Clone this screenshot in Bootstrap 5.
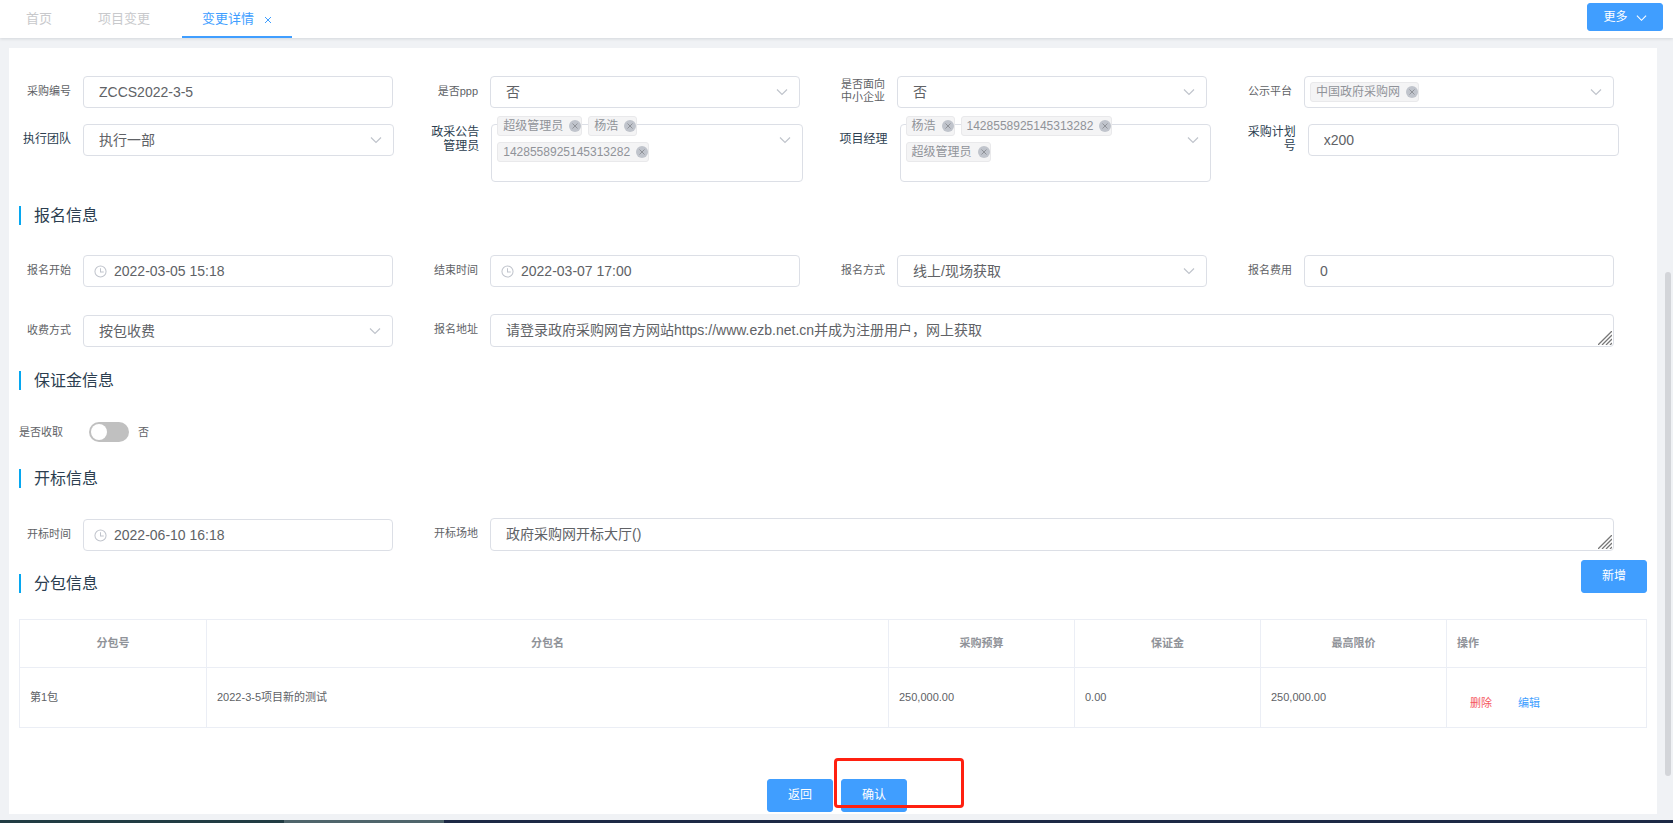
<!DOCTYPE html>
<html lang="zh-CN">
<head>
<meta charset="utf-8">
<meta name="viewport" content="width=device-width, initial-scale=1">
<title>变更详情</title>
<link href="https://cdn.jsdelivr.net/npm/bootstrap@5.3.0/dist/css/bootstrap.min.css" rel="stylesheet">
<style>
  body { font-family: "Liberation Sans", "Noto Sans CJK SC", sans-serif; font-size: 14px; color: #606266; background: #f0f2f5; }
  button, input, select, textarea { font-family: inherit; }

  /* top tabs */
  .topbar { height: 38px; box-shadow: 0 1px 3px rgba(0, 21, 41, .12); }
  .page-tabs { gap: 18px; padding-left: 12px; }
  .page-tabs .nav-link { height: 38px; padding: 0 14px; line-height: 38px; font-size: 13px; color: #c8c9cc; border-bottom: 2px solid transparent; }
  .page-tabs .nav-link.active { padding: 0 20px; color: #409eff; border-color: #409eff; }
  .page-tabs svg { margin-left: 10px; }
  .btn-main { --bs-btn-color: #fff; --bs-btn-bg: #409eff; --bs-btn-border-color: #409eff; --bs-btn-hover-color: #fff; --bs-btn-hover-bg: #66b1ff; --bs-btn-hover-border-color: #66b1ff; width: 66px; height: 33px; padding: 0 0 2px; font-size: 12px; line-height: 16px; border-radius: 3px; }
  .btn-more { width: 76px; height: 28px; margin: 3px 10px 0 0; padding: 0; }

  /* form */
  .panel { margin: 10px 16px 6px 9px; padding: 28px 10px 2px; }
  .cell { display: flex; padding-right: 33px; }
  .cell > label, .cell > .cell-label { flex: none; width: 52px; height: 30px; margin-right: 12px; display: flex; align-items: center; justify-content: flex-end; text-align: right; font-size: 11px; line-height: 13px; }
  .cell > .field { flex: 1; min-width: 0; position: relative; }
  .row-wide { margin: 16px -5px 0 0; }
  .row-wide .cell > label, .row-wide .cell > .cell-label { font-size: 12px; line-height: 14px; color: #2c3e50; }
  .form-control, .form-select { height: 32px; padding: 0 15px; font-size: 14px; line-height: 30px; color: #606266; border: 1px solid #dcdfe6; border-radius: 4px; }
  .form-select { background-image: url("data:image/svg+xml,%3Csvg xmlns='http://www.w3.org/2000/svg' viewBox='0 0 12 8'%3E%3Cpath d='M1 1.5l5 5 5-5' fill='none' stroke='%23c0c4cc' stroke-width='1.2'/%3E%3C/svg%3E"); background-size: 12px 8px; background-position: right 11px center; }
  textarea.form-control { display: block; height: 33px; min-height: 33px; resize: none; overflow: hidden; }
  .has-clock .form-control { padding-left: 30px; }
  .has-clock svg { position: absolute; left: 11px; top: 10px; }
  .grip { position: absolute; right: 2px; bottom: 2px; }

  /* multiple choice boxes */
  .multi { display: flex; align-items: center; justify-content: space-between; min-height: 32px; padding: 0 11px 0 5px; border: 1px solid #dcdfe6; border-radius: 4px; }
  .multi-tall { height: 58px; align-items: flex-start; }
  .multi-tall .tags { margin-top: -9px; }
  .multi-tall > svg { margin-top: 11px; }
  .tags { display: flex; flex-wrap: wrap; gap: 6px; }
  .tag { display: flex; align-items: center; height: 20px; padding: 0 0 0 5px; font-size: 12px; line-height: 18px; color: #909399; background: #f4f4f5; border: 1px solid #e9e9eb; border-radius: 3px; }
  .tag button { display: flex; width: 12px; height: 12px; margin-left: 6px; padding: 0; border: 0; border-radius: 50%; background: #c0c4cc; }

  .section-title { height: 19px; margin: 0; padding-left: 13px; border-left: 2px solid #06a7f0; font-size: 16px; font-weight: 400; line-height: 19px; color: #2c3e50; }
  .gap-title { margin-top: 24px; }
  .gap-fields { margin-top: 30px; }
  .gap-line { margin-top: 27px; }

  .switch-line { margin-top: 32px; gap: 26px; font-size: 11px; line-height: 20px; }
  .switch-line .form-check { min-height: 20px; margin: 0; padding: 0; display: flex; gap: 9px; }
  .switch-line .form-check-input { width: 40px; height: 20px; margin: 0; border: 0; background-color: #c0c0c0; background-image: url("data:image/svg+xml,%3Csvg xmlns='http://www.w3.org/2000/svg' viewBox='0 0 20 20'%3E%3Ccircle cx='10' cy='10' r='8' fill='white'/%3E%3C/svg%3E"); background-size: 20px 20px; }

  /* packages */
  .packages-head { margin-top: 9px; }
  .packages { margin: 26px 0 0; table-layout: fixed; font-size: 11px; border-color: #ebeef5; --bs-table-color: #606266; }
  .packages th, .packages td { padding: 0 10px; vertical-align: middle; }
  .packages th { height: 48px; color: #909399; text-align: center; }
  .packages td { height: 60px; }
  .packages .slim { width: 186px; }
  .packages .slim:first-child { width: 187px; }
  .packages .ops { width: 200px; text-align: left; }
  .packages td.ops { padding: 9px 0 0 23px; }
  .packages .btn { padding: 0; margin-right: 26px; font-size: 11px; line-height: 16px; border: 0; color: #409eff; }
  .packages .btn.remove { color: #f5565c; }
  .actions { margin-top: 51px; padding-left: 8px; gap: 8px; }
  .confirm-mark { position: absolute; left: -7px; top: -21px; width: 130px; height: 50px; border: 3px solid #ff2010; border-radius: 4px; pointer-events: none; }

  .scroll-thumb { position: absolute; right: 2px; top: 33%; bottom: 47px; width: 6px; border-radius: 3px; background: #d3d5d9; }
  .taskbar { height: 3px; background: #1d2945; }
  .taskbar .dim { width: 17%; background: #213c43; }
  .taskbar .lit { width: 160px; background: #4f656b; }
</style>
</head>
<body>
<svg width="0" height="0" class="position-absolute" aria-hidden="true">
  <symbol id="down" viewBox="0 0 12 8"><path d="M1 1.500l5 5 5-5" fill="none" stroke="currentColor" stroke-width="1.2"/></symbol>
  <symbol id="cross" viewBox="0 0 12 12"><path d="M3.500 3.500l5 5m0-5l-5 5" fill="none" stroke="#909399" stroke-width="1"/></symbol>
  <symbol id="clock" viewBox="0 0 14 14"><circle cx="7" cy="7" r="6" fill="none" stroke="#c0c4cc" stroke-width="1.1"/><path d="M7 3.500v4h3.500" fill="none" stroke="#c0c4cc" stroke-width="1.1"/></symbol>
  <symbol id="grip" viewBox="0 0 14 14"><path d="M0 14L14 0M4 14L14 4M8 14l6-6M12 14l2-2" fill="none" stroke="#777" stroke-width="1.3"/></symbol>
</svg>
<div class="position-relative min-vh-100 d-flex flex-column">
  <header class="topbar bg-white d-flex justify-content-between align-items-start">
    <ul class="nav page-tabs flex-nowrap">
      <li class="nav-item"><a class="nav-link" href="#">首页</a></li>
      <li class="nav-item"><a class="nav-link" href="#">项目变更</a></li>
      <li class="nav-item"><a class="nav-link active" href="#" aria-current="page">变更详情<svg width="8" height="8" viewBox="0 0 8 8" aria-hidden="true"><path d="M1 1l6 6M7 1L1 7" fill="none" stroke="currentColor"/></svg></a></li>
    </ul>
    <button type="button" class="btn btn-main btn-more">更多<svg class="ms-2" width="11" height="8" aria-hidden="true"><use href="#down"/></svg></button>
  </header>

  <main class="panel bg-white flex-grow-1">
    <form>
      <div class="row g-0">
        <div class="col-3 cell"><label for="no">采购编号</label><div class="field"><input id="no" class="form-control" value="ZCCS2022-3-5"></div></div>
        <div class="col-3 cell"><label for="ppp">是否ppp</label><div class="field"><select id="ppp" class="form-select"><option>否</option></select></div></div>
        <div class="col-3 cell"><label for="sme">是否面向中小企业</label><div class="field"><select id="sme" class="form-select"><option>否</option></select></div></div>
        <div class="col-3 cell"><span class="cell-label" id="l-plat">公示平台</span><div class="field"><div class="multi" role="group" aria-labelledby="l-plat"><div class="tags"><span class="tag">中国政府采购网<button type="button" aria-label="移除"><svg width="12" height="12"><use href="#cross"/></svg></button></span></div><svg width="12" height="8" color="#c0c4cc"><use href="#down"/></svg></div></div></div>
      </div>
      <div class="row g-0 row-wide">
        <div class="col-3 cell"><label for="team">执行团队</label><div class="field"><select id="team" class="form-select"><option>执行一部</option></select></div></div>
        <div class="col-3 cell"><span class="cell-label" id="l-adm">政采公告管理员</span><div class="field"><div class="multi multi-tall" role="group" aria-labelledby="l-adm"><div class="tags"><span class="tag">超级管理员<button type="button" aria-label="移除"><svg width="12" height="12"><use href="#cross"/></svg></button></span><span class="tag">杨浩<button type="button" aria-label="移除"><svg width="12" height="12"><use href="#cross"/></svg></button></span><span class="tag">1428558925145313282<button type="button" aria-label="移除"><svg width="12" height="12"><use href="#cross"/></svg></button></span></div><svg class="flex-shrink-0" width="12" height="8" color="#c0c4cc"><use href="#down"/></svg></div></div></div>
        <div class="col-3 cell"><span class="cell-label" id="l-pm">项目经理</span><div class="field"><div class="multi multi-tall" role="group" aria-labelledby="l-pm"><div class="tags"><span class="tag">杨浩<button type="button" aria-label="移除"><svg width="12" height="12"><use href="#cross"/></svg></button></span><span class="tag">1428558925145313282<button type="button" aria-label="移除"><svg width="12" height="12"><use href="#cross"/></svg></button></span><span class="tag">超级管理员<button type="button" aria-label="移除"><svg width="12" height="12"><use href="#cross"/></svg></button></span></div><svg class="flex-shrink-0" width="12" height="8" color="#c0c4cc"><use href="#down"/></svg></div></div></div>
        <div class="col-3 cell"><label for="plan">采购计划号</label><div class="field"><input id="plan" class="form-control" value="x200"></div></div>
      </div>

      <h2 class="section-title gap-title">报名信息</h2>
      <div class="row g-0 gap-fields">
        <div class="col-3 cell"><label for="start">报名开始</label><div class="field has-clock"><input id="start" class="form-control" value="2022-03-05 15:18"><svg width="13" height="13"><use href="#clock"/></svg></div></div>
        <div class="col-3 cell"><label for="end">结束时间</label><div class="field has-clock"><input id="end" class="form-control" value="2022-03-07 17:00"><svg width="13" height="13"><use href="#clock"/></svg></div></div>
        <div class="col-3 cell"><label for="way">报名方式</label><div class="field"><select id="way" class="form-select"><option>线上/现场获取</option></select></div></div>
        <div class="col-3 cell"><label for="fee">报名费用</label><div class="field"><input id="fee" class="form-control" value="0"></div></div>
      </div>
      <div class="row g-0 gap-line align-items-end">
        <div class="col-3 cell"><label for="charge">收费方式</label><div class="field"><select id="charge" class="form-select"><option>按包收费</option></select></div></div>
        <div class="col-9 cell"><label for="addr">报名地址</label><div class="field"><textarea id="addr" rows="1" class="form-control">请登录政府采购网官方网站https://www.ezb.net.cn并成为注册用户，网上获取</textarea><svg class="grip" width="14" height="14"><use href="#grip"/></svg></div></div>
      </div>

      <h2 class="section-title gap-title">保证金信息</h2>
      <div class="switch-line d-flex">
        <label for="deposit">是否收取</label>
        <div class="form-check form-switch"><input class="form-check-input" type="checkbox" role="switch" id="deposit"><span>否</span></div>
      </div>

      <h2 class="section-title gap-line">开标信息</h2>
      <div class="row g-0 gap-fields align-items-end">
        <div class="col-3 cell"><label for="open">开标时间</label><div class="field has-clock"><input id="open" class="form-control" value="2022-06-10 16:18"><svg width="13" height="13"><use href="#clock"/></svg></div></div>
        <div class="col-9 cell"><label for="hall">开标场地</label><div class="field"><textarea id="hall" rows="1" class="form-control">政府采购网开标大厅()</textarea><svg class="grip" width="14" height="14"><use href="#grip"/></svg></div></div>
      </div>

      <div class="packages-head d-flex justify-content-between align-items-end">
        <h2 class="section-title">分包信息</h2>
        <button type="button" class="btn btn-main">新增</button>
      </div>
      <table class="table table-bordered packages">
        <thead><tr><th class="slim">分包号</th><th>分包名</th><th class="slim">采购预算</th><th class="slim">保证金</th><th class="slim">最高限价</th><th class="ops">操作</th></tr></thead>
        <tbody><tr><td>第1包</td><td>2022-3-5项目新的测试</td><td>250,000.00</td><td>0.00</td><td>250,000.00</td><td class="ops"><button type="button" class="btn remove">删除</button><button type="button" class="btn">编辑</button></td></tr></tbody>
      </table>
      <div class="actions d-flex justify-content-center">
        <button type="button" class="btn btn-main">返回</button>
        <div class="position-relative"><button type="button" class="btn btn-main">确认</button><div class="confirm-mark"></div></div>
      </div>
    </form>
  </main>
  <footer class="taskbar d-flex"><div class="dim"></div><div class="lit"></div></footer>
  <div class="scroll-thumb"></div>
</div>
<script src="https://cdn.jsdelivr.net/npm/bootstrap@5.3.0/dist/js/bootstrap.bundle.min.js"></script>
</body>
</html>
